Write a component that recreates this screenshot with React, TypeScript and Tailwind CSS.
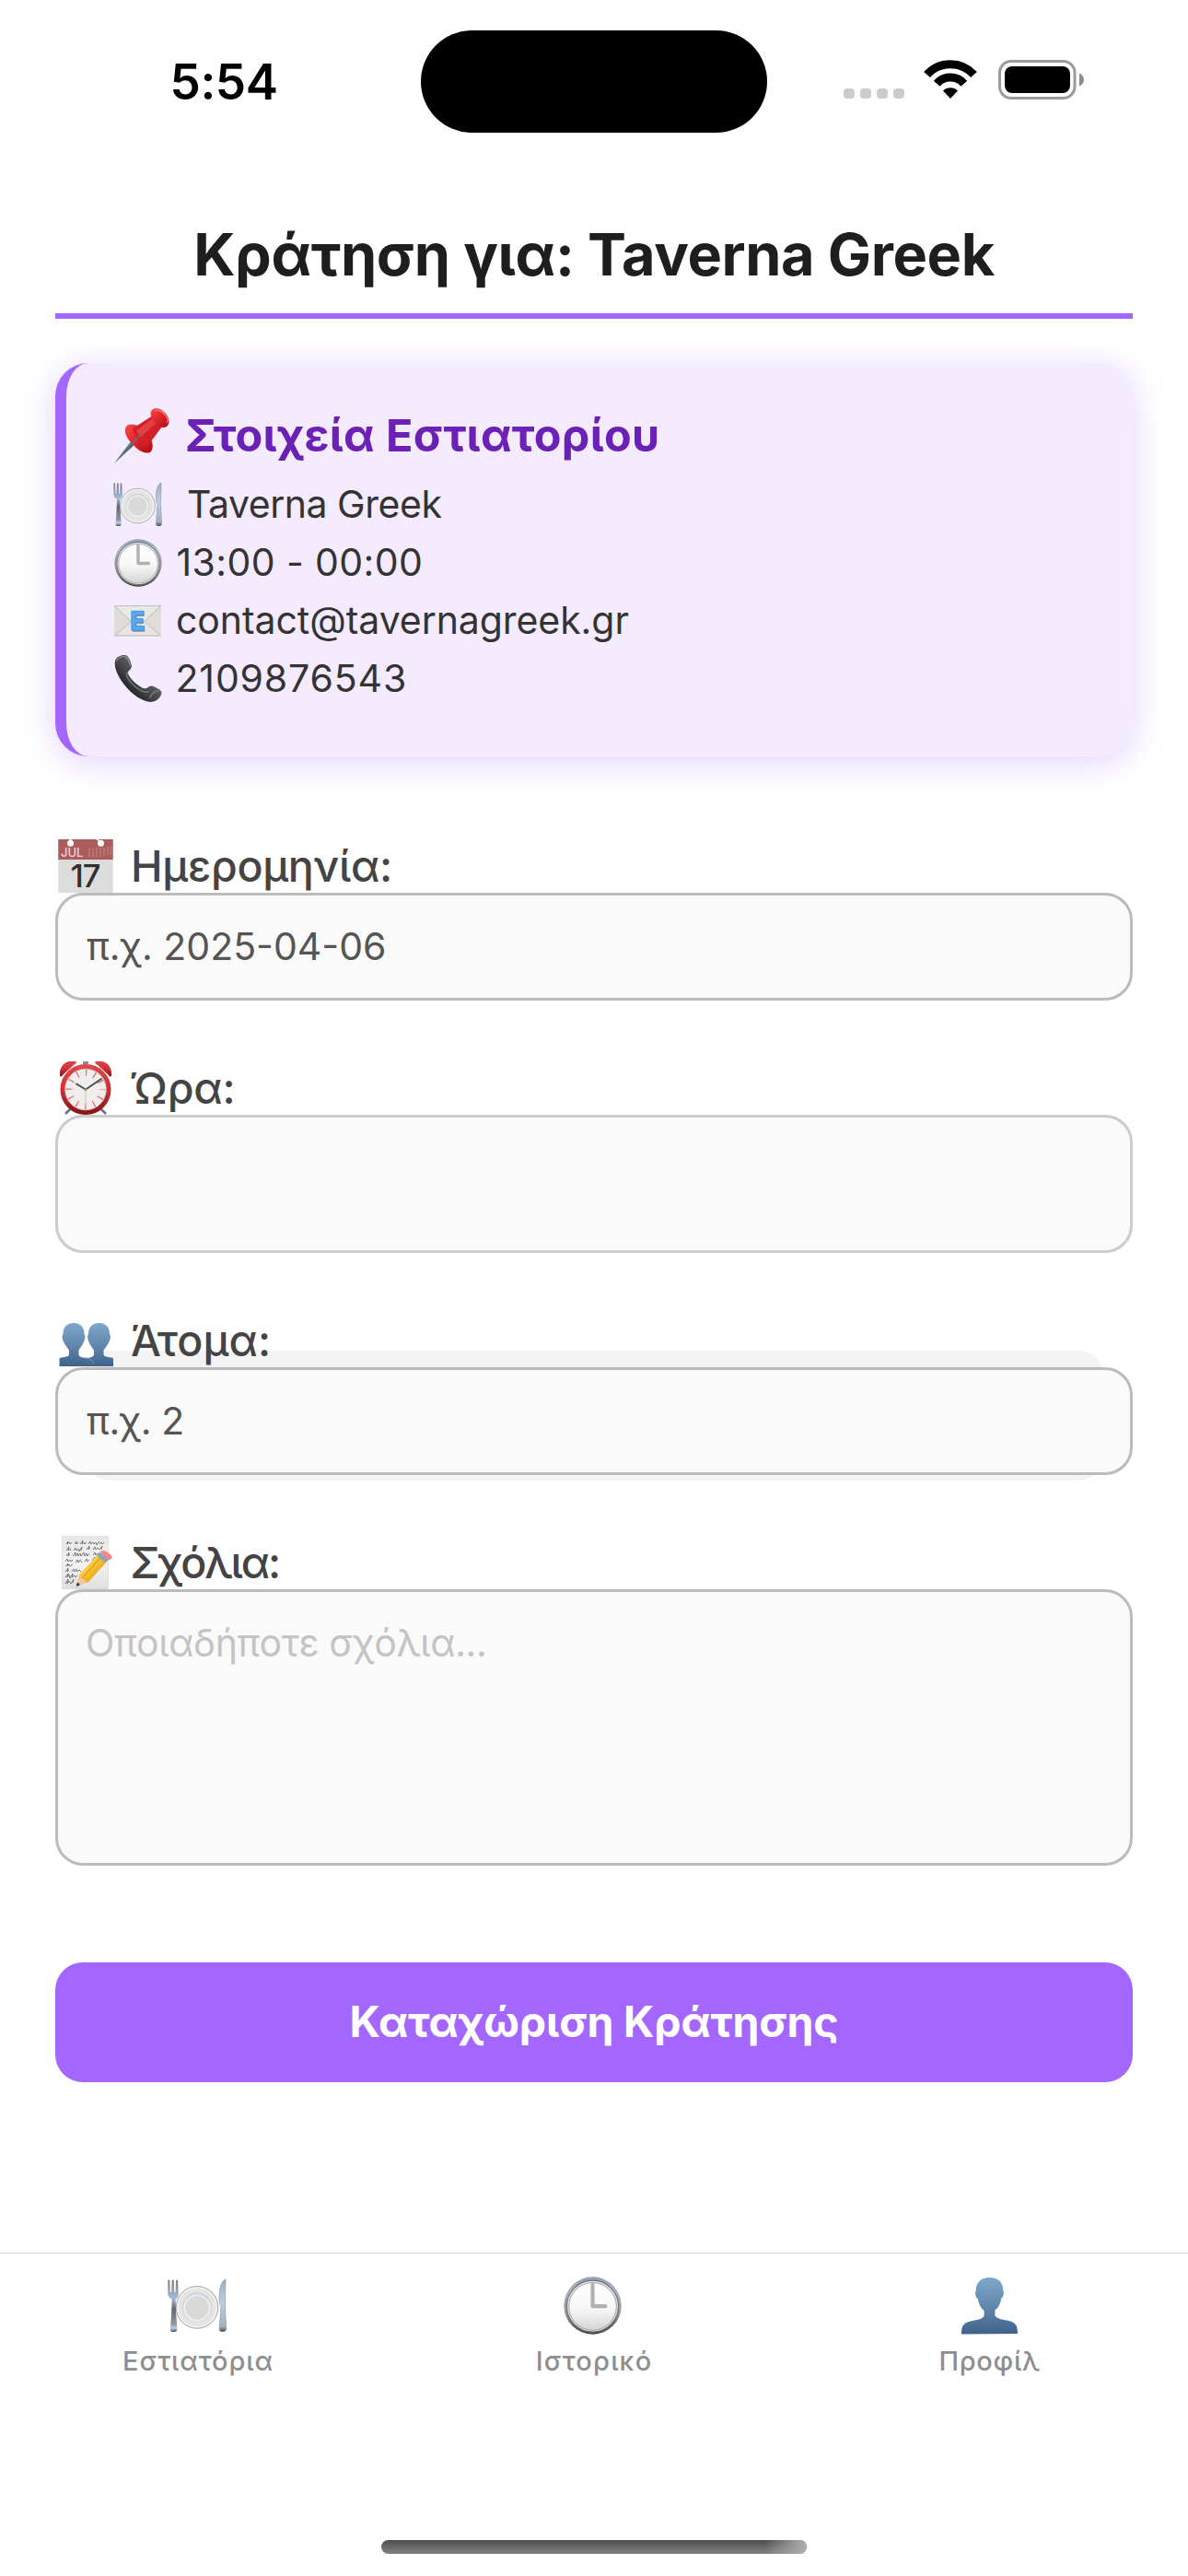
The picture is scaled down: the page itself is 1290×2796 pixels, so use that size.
import type { ReactNode } from 'react';

function Defs() {
  return (
    <svg className="absolute h-0 w-0" aria-hidden="true">
      <defs>
        <linearGradient id="silver" x1="0" y1="0" x2="0" y2="1">
          <stop offset="0" stopColor="#8f9fb4" />
          <stop offset="0.25" stopColor="#a9b5c4" />
          <stop offset="0.6" stopColor="#9b9897" />
          <stop offset="1" stopColor="#444444" />
        </linearGradient>
        <linearGradient id="face" x1="0" y1="0" x2="0" y2="1">
          <stop offset="0" stopColor="#ffffff" />
          <stop offset="0.55" stopColor="#f7f7f7" />
          <stop offset="1" stopColor="#d4d4d4" />
        </linearGradient>
        <linearGradient id="steel" x1="0" y1="0" x2="0" y2="1">
          <stop offset="0" stopColor="#75787c" />
          <stop offset="0.35" stopColor="#a6bbd8" />
          <stop offset="0.55" stopColor="#62676d" />
          <stop offset="0.85" stopColor="#8e97a3" />
          <stop offset="0.93" stopColor="#b9cfec" />
          <stop offset="1" stopColor="#4a4a4a" />
        </linearGradient>
        <linearGradient id="knife" x1="0" y1="0" x2="0" y2="1">
          <stop offset="0" stopColor="#9fafc1" />
          <stop offset="0.45" stopColor="#bccee2" />
          <stop offset="0.9" stopColor="#a3b1c1" />
          <stop offset="1" stopColor="#444" />
        </linearGradient>
        <linearGradient id="bust" x1="0" y1="0" x2="0" y2="1">
          <stop offset="0" stopColor="#7ea8cb" />
          <stop offset="0.5" stopColor="#6189ae" />
          <stop offset="1" stopColor="#40628a" />
        </linearGradient>
        <linearGradient id="red" x1="0" y1="0" x2="1" y2="1">
          <stop offset="0" stopColor="#f4494b" />
          <stop offset="0.5" stopColor="#e3232a" />
          <stop offset="1" stopColor="#a80d17" />
        </linearGradient>
        <linearGradient id="needle" x1="0" y1="0" x2="1" y2="1">
          <stop offset="0.35" stopColor="#a9dcf0" />
          <stop offset="0.55" stopColor="#3e4d5c" />
        </linearGradient>
        <linearGradient id="paper" x1="0" y1="0" x2="0" y2="1">
          <stop offset="0" stopColor="#e6e6e6" />
          <stop offset="0.5" stopColor="#f3f3f3" />
          <stop offset="1" stopColor="#dedede" />
        </linearGradient>
        <linearGradient id="ring" x1="0" y1="0" x2="0" y2="1">
          <stop offset="0" stopColor="#e0454b" />
          <stop offset="0.5" stopColor="#cf2f35" />
          <stop offset="1" stopColor="#8c1519" />
        </linearGradient>
        <linearGradient id="phone" x1="0" y1="1" x2="1" y2="0">
          <stop offset="0.3" stopColor="#2a2c2d" />
          <stop offset="0.5" stopColor="#4a4c4e" />
          <stop offset="0.75" stopColor="#77797b" />
        </linearGradient>
        <linearGradient id="pencil" x1="0" y1="0" x2="1" y2="1">
          <stop offset="0.3" stopColor="#ffd94a" />
          <stop offset="0.7" stopColor="#eca416" />
        </linearGradient>
      </defs>
    </svg>
  );
}

function Plate({ className }: { className: string }) {
  return (
    <svg viewBox="0 0 100 90" className={className}>
      <path d="M0 1h3l1 21h2L7 1h3l1 21h2l1-21h3l1 24c0 5-2 8-5 9l1 25 2 27c0 3-3 4-6 4s-6-1-6-4l2-27 1-25c-3-1-7-4-7-9z" fill="url(#steel)" />
      <path d="M99 0c-7 2-11 14-11 32 0 6 1 11 3 13l-3 40c0 3 2 5 6 5s6-2 6-5l-2-40z" fill="url(#knife)" stroke="#8794a3" strokeWidth="1" />
      <circle cx="50" cy="48" r="36" fill="#e4e4e3" stroke="#9f9d9b" strokeWidth="1.500" />
      <circle cx="50" cy="48" r="33.500" fill="none" stroke="#f6f6f6" strokeWidth="2" />
      <circle cx="50" cy="48" r="25" fill="#cbcfd5" />
      <circle cx="50" cy="49" r="23.500" fill="#eaedf1" />
      <circle cx="50" cy="48.500" r="20" fill="#d9d9d8" />
    </svg>
  );
}

function Clock({ className }: { className: string }) {
  return (
    <svg viewBox="0 0 100 100" className={className}>
      <circle cx="50" cy="50" r="49.500" fill="url(#silver)" />
      <circle cx="50" cy="51" r="44.500" fill="#dfe4ea" stroke="#6d6f72" strokeWidth="1.800" />
      <circle cx="50" cy="51.500" r="41" fill="url(#face)" stroke="#9c9c9d" strokeWidth="1.500" />
      <path d="M50 14v37h22" fill="none" stroke="#b0b0b0" strokeWidth="6.500" strokeLinecap="round" strokeLinejoin="round" />
    </svg>
  );
}

function Email({ className }: { className: string }) {
  return (
    <svg viewBox="0 0 100 66" className={className}>
      <rect width="100" height="66" rx="2" fill="#dedddb" />
      <path d="M1 64L38 33h24l37 31z" fill="#e6e5e4" stroke="#b4b3b2" strokeWidth="1.500" />
      <path d="M1 1h98L56 41q-6 5-12 0z" fill="#e9e9e8" stroke="#b0afae" strokeWidth="1.500" />
      <path d="M39 14h25v9H48v7h14v9H48v8h17v9H39z" fill="#3c4650" opacity="0.5" />
      <path d="M37 12h26v9H46v7h15v9H46v7h18v9H37z" fill="#55a9f5" stroke="#3387d4" strokeWidth="1.500" />
    </svg>
  );
}

function Phone({ className }: { className: string }) {
  return (
    <svg viewBox="0 0 100 100" className={className}>
      <path d="M1 12C3 5 12 0 20 0c7 0 9 3 13 12l3 9c1 6-2 9-6 13-3 3-1 7 2 12 6 9 14 16 24 22 5 3 9 4 13 2 5-4 9-6 15-3l11 6c6 4 6 8 3 14-5 9-13 13-22 13-13-1-30-10-44-24C14 58-3 31 1 12z" fill="url(#phone)" />
      <path d="M4 13c2-6 9-10 16-10 5 0 7 3 11 12l2 7" fill="none" stroke="#8c8e90" strokeWidth="2.500" />
      <path d="M28 36c-5 5-2 10 2 16 7 10 16 18 27 24 6 3 11 4 16 1" fill="none" stroke="#6f7173" strokeWidth="3" />
      <path d="M75 92c2-8 8-15 19-16" fill="none" stroke="#77797b" strokeWidth="3" />
    </svg>
  );
}

function Pin({ className }: { className: string }) {
  return (
    <svg viewBox="0 0 60 60" className={className}>
      <path d="M0 60L23 29l5 5z" fill="url(#needle)" />
      <path d="M13 20c4-5 14-2 22 6 7 8 9 18 4 22-5 2-12-1-18-8-8-7-11-15-8-20z" fill="url(#red)" />
      <path d="M20 22L42 8l10 12-15 20c-4 3-17-9-17-18z" fill="#d51f27" />
      <path d="M24 25L43 10l4 5-18 16z" fill="#f06a6c" opacity="0.450" />
      <path d="M41 2c3-3 10-2 14 3 5 5 6 12 2 15-3 2-9 1-13-4-4-5-6-11-3-14z" fill="url(#red)" />
      <path d="M44 3c3-2 8 0 11 4 3 3 4 7 2 9" fill="none" stroke="#ff8a86" strokeWidth="1.500" opacity="0.800" />
      <path d="M0 60L27 28l2 2z" fill="#5c6d7d" opacity="0.700" />
    </svg>
  );
}

function Calendar() {
  return (
    <svg viewBox="0 0 60 58" className="h-[58px] w-[60px] overflow-visible">
      <rect x="0.300" width="59.400" height="58" fill="#dcdcdc" />
      <rect x="0.300" width="59.400" height="22" fill="#ab5c5d" />
      <circle cx="13.500" cy="4.300" r="3.500" fill="#fff" />
      <path d="M12.500 0h2v4h-2zM41 0h3l3 4z" fill="#fff" />
      <circle cx="46.500" cy="4.300" r="3.500" fill="#fff" />
      <text x="3" y="18.800" className="font-['Inter'] text-[13px]" fill="#ecd3d3">JUL</text>
      <path d="M34 10v9M38 10v9M42 9v10M46 9v10M50 9v9M54 8v9M57.500 8v9" stroke="#c58a8a" strokeWidth="1.300" strokeDasharray="2 0.700" />
      <text x="29.500" y="52" textAnchor="middle" className="font-['Inter'] text-[34.5px] tracking-[-1px]" fill="#303030">17</text>
    </svg>
  );
}

function Alarm() {
  return (
    <svg viewBox="0 0 60 58" className="h-[58px] w-[60px]">
      <path d="M15 50l-7 7M45 50l7 7" stroke="#6a727c" strokeWidth="2.500" />
      <path d="M27 0h6v3h-6z" fill="#8b8f94" />
      <path d="M2 15C1 8 6 1 12 0h7c2 1 0 3-2 4L5 15c-1 2-3 2-3 0zM58 15C59 8 54 1 48 0h-7c-2 1 0 3 2 4l12 11c1 2 3 2 3 0z" fill="url(#ring)" />
      <circle cx="30" cy="30.500" r="25" fill="#eeeeee" stroke="url(#ring)" strokeWidth="5" />
      <circle cx="30" cy="30.500" r="22.300" fill="none" stroke="#bdb5b4" strokeWidth="0.800" />
      <circle cx="30" cy="30.500" r="18" fill="none" stroke="#f26a6a" strokeWidth="7" strokeDasharray="1.300 8.125" strokeDashoffset="0.650" />
      <path d="M30 30.500L20 24.500M30 30.500l17-11.500" stroke="#4b4f52" strokeWidth="2" strokeLinecap="round" />
      <path d="M30 30.500V49" stroke="#d7c4a2" strokeWidth="1" />
      <circle cx="30" cy="30.500" r="1.500" fill="#9c8a6c" />
    </svg>
  );
}

function Bust() {
  return (
    <path
      d="M17 0c8 0 11.500 5 11.500 12 1.500 1.500 1 6-0.500 8-0.700 4-5.500 8-5.500 10.500v4c1 3 5 3 9.500 4 5 1 7 3 7 8.500H1.500v-8c0-1 1-1.500 3-1.500 3-0.500 6.500-1 7.500-3v-4c0-2.500-5-6.500-6-10.500-1.500-2-2-6.500-0.500-8C5.500 5 9 0 17 0z"
      fill="url(#bust)"
    />
  );
}

function People() {
  return (
    <svg viewBox="0 0 60 58" className="h-[58px] w-[60px]">
      <g transform="translate(0 10)">
        <g transform="translate(61.500 0) scale(-1 1)">
          <Bust />
        </g>
        <Bust />
        <path d="M29 37.500c6 1 9 3 9.500 7" fill="none" stroke="#7fa6c4" strokeWidth="0.800" />
      </g>
    </svg>
  );
}

function Memo() {
  return (
    <svg viewBox="0 0 60 58" className="h-[58px] w-[60px]">
      <rect x="4.500" y="0.500" width="50" height="57.500" fill="url(#paper)" stroke="#d6d6d6" strokeWidth="0.600" />
      <g fill="none" stroke="#6d6d6d" strokeWidth="0.900">
        <path d="M9 9l2-3-1 3 2-2 1 2 2-2M18 9l2-3v3l2-2M24 9l3-4-1 4 2-2 1 2 2-2M33 9l2-3 1 3 2-2 1 2 2-2 1 3 3-4M45 9l2-2 1 2 2-2" />
        <path d="M9 16l3-4-1 4 2-2 1 2M17 16l2-3 1 3 2-2 1 3 3-5-1 4M31 15l3-4-1 4 2-2M38 15l2-3 1 3 2-2 2 2 3-4-1 4" />
        <path d="M9 22l3-4-1 4 2-2M16 22l3-4v4l2-3 1 3 2-3 1 3 3-4 1 4 2-3 1 3 2-3M38 21l2-3 1 3 2-2 3 2" />
        <path d="M8 28l2-3 1 3 2-2 1 2 2-2M19 29l2-3 1 3 2-3 2 3M29 28l2-3 1 3 2-2M37 27l3-4v4" />
        <path d="M8 33l3-3-1 3 2-2 1 2 3-2" />
        <path d="M8 39l3-4-1 4 2-2M15 39l2-3 1 3 2-3 1 3 2-2 2 2" />
        <path d="M8 45l3-4-1 4 2-3 1 4 3-5-1 4 3-2 1 2 2-2" />
        <path d="M8 52l3-5-1 5 2-3 2 3 3-5-1 4" />
      </g>
      <path d="M20 55L48 31" stroke="#555" strokeWidth="3" opacity="0.250" />
      <path d="M20 54.500l3-12 9 8z" fill="#ecc79a" />
      <path d="M20 54.500l1-4 3 2.500z" fill="#222" />
      <path d="M22.500 43L43 20.500l9.500 8L32 51q-2-1-4-4-4-1-5.500-4z" fill="url(#pencil)" />
      <path d="M26 46l20.500-23" stroke="#c98a12" strokeWidth="1" />
      <path d="M42 21.500l3.500-3.800 9.500 8-3.500 3.800z" fill="#8fa5b8" />
      <path d="M45.500 17.700q3-3 7-.7 5 3 6.500 6-1 3-4 3.500z" fill="#f2878f" />
    </svg>
  );
}

function Profile({ className }: { className: string }) {
  return (
    <svg viewBox="0 0 64 64" className={className}>
      <path d="M1 63.500c0-9 2-12 9-14 8-2 14-2 16-6v-6c-4-3-6-7-7-13-3-2-3-7-2-9C17 6 23 1 32 1s15 5 15 14c1 2 1 7-2 9-1 6-3 10-7 13v6c2 4 8 4 16 6 7 2 9 5 9 14z" fill="url(#bust)" />
    </svg>
  );
}

function StatusBar() {
  return (
    <div className="flex h-[232px] shrink-0 items-start pt-[33px]">
      <div className="flex h-[112px] w-[457px] items-center pl-[184.6px] text-[53px] font-semibold leading-none tracking-[-0.5px] text-black">
        5:54
      </div>
      <div className="h-[111px] w-[376px] rounded-full bg-black" />
      <div className="ml-[83px] mt-[32px] flex h-[43px] items-end">
        <div className="mb-px flex gap-[6px]">
          <span className="h-[11px] w-[12px] rounded-[4px] bg-[#cccccc]" />
          <span className="h-[11px] w-[12px] rounded-[4px] bg-[#cccccc]" />
          <span className="h-[11px] w-[12px] rounded-[4px] bg-[#cccccc]" />
          <span className="h-[11px] w-[12px] rounded-[4px] bg-[#cccccc]" />
        </div>
        <svg viewBox="0 0 58 42" className="mb-px ml-[21px] h-[42px] w-[58px]">
          <g fill="none" stroke="#000" strokeWidth="9">
            <path d="M3.500 16.100A34.300 34.300 0 0 1 54.500 16.100" />
            <path d="M14.200 25.700A19.900 19.900 0 0 1 43.800 25.700" />
          </g>
          <path d="M21 33.500a11.500 11.500 0 0 1 16 0L29 42z" />
        </svg>
        <svg viewBox="0 0 94 43" className="ml-[23px] h-[43px] w-[94px]">
          <rect x="1.500" y="1.500" width="81.500" height="40" rx="12.500" fill="none" stroke="#9b9b9b" strokeWidth="3" />
          <rect x="7" y="7" width="71" height="29" rx="8" />
          <path d="M88 14.500c6.500 2.500 6.500 11.500 0 14z" fill="#8c8c8c" />
        </svg>
      </div>
    </div>
  );
}

function InfoRow({ icon, children }: { icon: ReactNode; children: ReactNode }) {
  return (
    <div className="flex h-[63px] items-center text-[41px] leading-[63px] text-[#333]">
      <span className="flex w-[59px] shrink-0 justify-center">{icon}</span>
      {children}
    </div>
  );
}

function Field({ icon, label, children, className = '' }: { icon: ReactNode; label: ReactNode; children: ReactNode; className?: string }) {
  return (
    <div className={`relative ${className}`}>
      <label className="relative flex h-[58px] items-center pl-[3px] text-[46.5px] font-medium leading-[58px] text-[#444]">
        {icon}
        {label}
      </label>
      {children}
    </div>
  );
}

export default function App() {
  return (
    <div className="flex h-[2796px] w-[1290px] flex-col overflow-hidden bg-white font-['Inter','Noto_Sans',sans-serif]">
      <Defs />
      <StatusBar />

      <main className="flex flex-1 flex-col px-[60px]">
        <h1 className="h-[114px] border-b-[6px] border-[#a366ff] text-center text-[63px] font-bold leading-[89px] tracking-[-0.4px] whitespace-nowrap text-[#1e1e1e]">
          Κράτηση για: Taverna Greek
        </h1>

        <section className="mt-12 h-[427px] rounded-[36px] border-l-[12px] border-[#a366ff] bg-[#f4ebff] pl-12 pt-[49px] shadow-[0_6px_36px_rgba(163,102,255,0.3)]">
          <h2 className="mb-[13px] flex h-[60px] items-center text-[48.5px] font-bold leading-[60px] tracking-[0.32px] text-[#6b21b6]">
            <Pin className="ml-[4px] h-[60px] w-[60px]" />
            <span className="ml-[17px]">Στοιχεία Εστιατορίου</span>
          </h2>
          <InfoRow icon={<Plate className="h-[47px] w-[53px]" />}>
            <span className="ml-[24px] tracking-[-0.47px]">Taverna Greek</span>
          </InfoRow>
          <InfoRow icon={<Clock className="h-[52px] w-[52px]" />}>
            <span className="ml-[12.5px] tracking-[0.39px]">13:00 - 00:00</span>
          </InfoRow>
          <InfoRow icon={<Email className="h-[34px] w-[51px]" />}>
            <span className="ml-[12px] tracking-[-0.07px]">contact@tavernagreek.gr</span>
          </InfoRow>
          <InfoRow icon={<Phone className="h-[51px] w-[52px]" />}>
            <span className="ml-[11.5px] tracking-[0.85px]">2109876543</span>
          </InfoRow>
        </section>

        <Field className="mt-[90px]" icon={<Calendar />} label={<span className="ml-[19px] tracking-[-0.29px]">Ημερομηνία:</span>}>
          <input
            placeholder="π.χ. 2025-04-06"
            className="block h-[117px] w-full rounded-[30px] border-[3px] border-[#bbb] bg-[#fafafa] px-[31px] pb-[2px] text-[41px] placeholder:text-[#555]"
          />
        </Field>

        <Field className="mt-[66px]" icon={<Alarm />} label={<span className="ml-[17.5px] tracking-[-0.13px]">Ώρα:</span>}>
          <div className="h-[150px] rounded-[30px] border-[3px] border-[#ccc] bg-[#fafafa]" />
        </Field>

        <Field className="isolate mt-[66px]" icon={<People />} label={<span className="ml-[19px] tracking-[0.15px]">Άτομα:</span>}>
          <div className="absolute inset-x-[30px] -bottom-[6px] -z-10 h-[141px] rounded-[30px] bg-[#f3f3f3]" />
          <input
            placeholder="π.χ. 2"
            className="block h-[117px] w-full rounded-[30px] border-[3px] border-[#bbb] bg-[#fafafa] px-[31px] pb-[2px] text-[41px] tracking-[-0.4px] placeholder:text-[#555]"
          />
        </Field>

        <Field className="mt-[66px]" icon={<Memo />} label={<span className="ml-[18.5px] tracking-[-2.15px]">Σχόλια:</span>}>
          <textarea
            placeholder="Οποιαδήποτε σχόλια..."
            className="block h-[300px] w-full resize-none rounded-[30px] border-[3px] border-[#bbb] bg-[#fafafa] px-[30px] pt-[25px] text-[41px] leading-[60px] tracking-[-0.36px] placeholder:text-[#c4c4c6]"
          />
        </Field>

        <button className="mt-[105px] h-[130px] rounded-[30px] bg-[#a366ff] text-[46.5px] font-bold tracking-[-0.2px] text-white">
          Καταχώριση Κράτησης
        </button>
      </main>

      <nav className="flex h-[351px] shrink-0 flex-col border-t border-[#d8d8d8] text-[29px] font-medium leading-10 text-[#8e8e8f]">
        <div className="grid grid-cols-3 pt-[25px]">
          <div className="flex flex-col items-center gap-[9px]">
            <span className="flex h-[63px] items-center pr-[2px]">
              <Plate className="h-[57px] w-16" />
            </span>
            <span className="tracking-[0.92px]">Εστιατόρια</span>
          </div>
          <div className="flex flex-col items-center gap-[9px]">
            <span className="pr-[3px]">
              <Clock className="h-[63px] w-[63px]" />
            </span>
            <span className="tracking-[1.18px]">Ιστορικό</span>
          </div>
          <div className="flex flex-col items-center gap-[9px]">
            <span className="pr-[2px]">
              <Profile className="h-[63px] w-[63px]" />
            </span>
            <span className="pr-px tracking-[0.7px]">Προφίλ</span>
          </div>
        </div>
        <div className="mx-auto mt-auto mb-6 h-[15px] w-[462px] overflow-hidden rounded-full bg-linear-to-b from-[#4c4e4c] to-[#848484]">
          <div className="ml-auto h-full w-[45px] bg-linear-to-r from-transparent to-[#b0b0b0]" />
        </div>
      </nav>
    </div>
  );
}
